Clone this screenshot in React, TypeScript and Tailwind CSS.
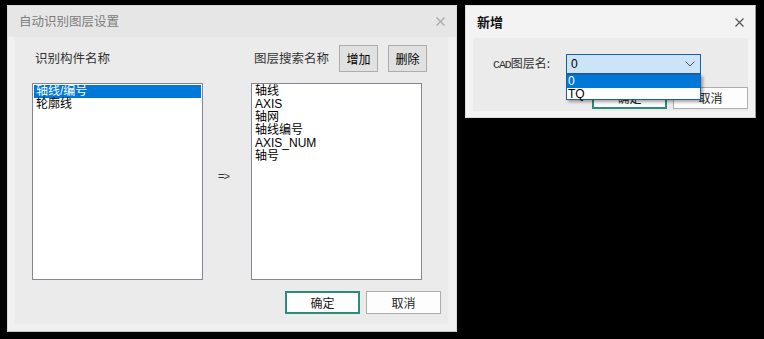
const cjk = "font-['Microsoft_YaHei','Noto_Sans_CJK_SC',sans-serif]";

function CloseX({ color }: { color: string }) {
  return (
    <svg width="9" height="9" viewBox="0 0 9 9" className="block">
      <path d="M0.5 0.5 L8.5 8.5 M8.5 0.5 L0.5 8.5" stroke={color} strokeWidth="1.2" />
    </svg>
  );
}

function Btn({ label, primary, w, h }: { label: string; primary?: boolean; w: string; h: string }) {
  return (
    <div
      className={`${w} ${h} flex items-center justify-center bg-[#fdfdfd] text-[12px] text-[#222] ${
        primary ? 'border-2 border-[#2e8b7a]' : 'border border-[#adadad]'
      }`}
    >
      {label}
    </div>
  );
}

function ListBox({ items, selected }: { items: string[]; selected?: number }) {
  return (
    <div className="w-[171px] h-[197px] border border-[#828790] bg-white p-[1px] font-['Liberation_Sans','Noto_Sans_CJK_SC',sans-serif]">
      {items.map((t, i) => (
        <div
          key={t}
          className={`h-[13px] pl-[2px] text-[12px] leading-[13px] whitespace-nowrap ${
            i === selected ? 'bg-[#0078d7] text-white' : 'text-black'
          }`}
        >
          {t}
        </div>
      ))}
    </div>
  );
}

export default function App() {
  return (
    <div className={`relative w-[764px] h-[339px] bg-black overflow-hidden ${cjk}`}>
      {/* main dialog */}
      <div className="absolute left-[7px] top-[5px] w-[450px] h-[327px] bg-[#f0f0f0] border border-[#dadada] border-b-[#c4c4c4] flex flex-col">
        <div className="h-[31px] shrink-0 bg-[#e6e6e6] flex items-center justify-between pl-[11px] pr-[11px]">
          <span className="text-[12.5px] text-[#7c7c7c]">自动识别图层设置</span>
          <CloseX color="#a8a8a8" />
        </div>
        <div className="flex-1 flex flex-col pl-[7px] pr-[8px] pb-[7px]">
          <div className="flex-1 bg-[#ebebeb] flex flex-col pt-[8px] pl-[17px]">
            <div className="flex items-center h-[27px]">
              <div className="w-[171px] pl-[3px] text-[12.5px] text-[#333]">识别构件名称</div>
              <div className="w-[48px]" />
              <div className="w-[88px] pl-[3px] text-[12.5px] text-[#333]">图层搜索名称</div>
              <div className="w-[39px] h-[27px] flex items-center justify-center bg-[#e1e1e1] border border-[#adadad] text-[12px] text-black">增加</div>
              <div className="ml-[10px] w-[39px] h-[27px] flex items-center justify-center bg-[#e1e1e1] border border-[#adadad] text-[12px] text-black">删除</div>
            </div>
            <div className="mt-[11px] flex">
              <ListBox items={['轴线/编号', '轮廓线']} selected={0} />
              <div className="w-[48px] flex flex-col justify-center pl-[15px] pb-[11px] text-[11px] tracking-[-1px] text-[#333] font-['Liberation_Sans',sans-serif]">
                =&gt;
              </div>
              <ListBox items={['轴线', 'AXIS', '轴网', '轴线编号', 'AXIS_NUM', '轴号']} />
            </div>
            <div className="mt-[11px] flex justify-end gap-[6px] pr-[7px]">
              <Btn label="确定" primary w="w-[75px]" h="h-[23px]" />
              <Btn label="取消" w="w-[75px]" h="h-[23px]" />
            </div>
          </div>
        </div>
      </div>

      {/* add dialog */}
      <div className="absolute left-[465px] top-[5px] w-[291px] h-[113px] bg-[#f3f3f3] border border-[#dcdcdc] border-r-[#9a9a9a] flex flex-col">
        <div className="h-[32px] shrink-0 flex items-center justify-between pl-[11px] pr-[11px]">
          <span className="text-[13px] font-bold text-[#111]">新增</span>
          <CloseX color="#555" />
        </div>
        <div className="flex-1 flex flex-col pl-[7px] pr-[7px] pb-[6px]">
          <div className="relative flex-1 bg-[#ebebeb] flex flex-col pt-[16px]">
            <div className="flex items-center h-[20px]">
              <div className="w-[93px] pl-[20px] text-[12px] text-[#333] whitespace-nowrap">
                <span className="font-['Liberation_Mono',monospace] text-[11.5px] tracking-[-1px]">CAD</span>图层名:
              </div>
              <div className="w-[135px] h-[20px] bg-[#cce4f7] border border-[#1b5fa8] flex items-center justify-between pl-[4px] pr-[5px]">
                <span className="text-[12px] text-black font-['Liberation_Sans',sans-serif]">0</span>
                <svg width="10" height="6" viewBox="0 0 10 6" className="block">
                  <path d="M0.5 0.5 L5 5 L9.5 0.5" fill="none" stroke="#555" strokeWidth="1" />
                </svg>
              </div>
            </div>
            <div className="mt-[13px] flex pl-[119px] gap-[6px]">
              <Btn label="确定" primary w="w-[75px]" h="h-[22px]" />
              <Btn label="取消" w="w-[75px]" h="h-[22px]" />
            </div>
            <div className="absolute left-[93px] top-[36px] w-[135px] h-[26px] bg-white border border-[#1b5fa8] shadow-[2px_2px_3px_rgba(0,0,0,0.35)] font-['Liberation_Sans',sans-serif] text-[12px]">
              <div className="h-[13px] leading-[13px] bg-[#0078d7] text-white pl-[1px]">0</div>
              <div className="h-[11px] leading-[12px] text-black pl-[1px]">TQ</div>
            </div>
          </div>
        </div>
      </div>
    </div>
  );
}
